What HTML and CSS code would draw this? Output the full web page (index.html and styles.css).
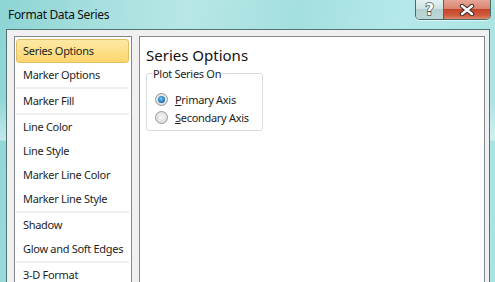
FILE: index.html
```html
<!DOCTYPE html>
<html>
<head>
<meta charset="utf-8">
<link rel="stylesheet" href="styles.css">
</head>
<body>
<div class="window">
  <div class="titlebar">
    <span class="title">Format Data Series</span>
    <div class="caption-buttons">
      <div class="cbtn help"><span class="help-glyph">?</span></div>
      <div class="cbtn close">
        <svg width="16" height="12" viewBox="0 0 16 12">
          <path d="M3 2 L13 10 M13 2 L3 10" stroke="#3a2a28" stroke-width="4.4" stroke-linecap="round"/>
          <path d="M3 2 L13 10 M13 2 L3 10" stroke="#ffffff" stroke-width="2.4" stroke-linecap="round"/>
        </svg>
      </div>
    </div>
  </div>
  <div class="client">
    <ul class="nav">
      <li class="item selected">Series Options</li>
      <li class="item">Marker Options</li>
      <li class="sep"></li>
      <li class="item">Marker Fill</li>
      <li class="sep"></li>
      <li class="item">Line Color</li>
      <li class="item">Line Style</li>
      <li class="item">Marker Line Color</li>
      <li class="item">Marker Line Style</li>
      <li class="sep"></li>
      <li class="item">Shadow</li>
      <li class="item">Glow and Soft Edges</li>
      <li class="sep"></li>
      <li class="item">3-D Format</li>
    </ul>
    <div class="panel">
      <h1 class="heading">Series Options</h1>
      <fieldset class="group">
        <legend class="group-title">Plot Series On</legend>
        <label class="radio-row"><span class="radio checked"></span><span class="radio-label"><u>P</u>rimary Axis</span></label>
        <label class="radio-row"><span class="radio"></span><span class="radio-label"><u>S</u>econdary Axis</span></label>
      </fieldset>
    </div>
  </div>
</div>
</body>
</html>
```

FILE: styles.css
```css
html, body {
  margin: 0;
  padding: 0;
}
body {
  width: 495px;
  height: 282px;
  overflow: hidden;
  font-family: "Segoe UI", "Noto Sans", sans-serif;
  font-size: 11px;
  letter-spacing: -0.3px;
  color: #1e1e1e;
}
.window {
  width: 495px;
  height: 282px;
  display: flex;
  flex-direction: column;
  background:
    linear-gradient(to bottom, rgba(255,255,255,0) 0px, rgba(255,255,255,0) 100px, rgba(255,255,255,0.45) 140px, rgba(255,255,255,0) 141px),
    linear-gradient(100deg, #8dd4d4 0%, #a8e0df 20%, #b7e7e6 35%, #a4dfdf 55%, #b5e9e9 75%, #a8e2e2 100%);
}
.titlebar {
  height: 29px;
  flex: none;
  display: flex;
  align-items: flex-start;
}
.title {
  margin: 7px 0 0 8px;
  line-height: 16px;
  font-size: 12px;
  letter-spacing: -0.35px;
  color: #111;
}
.caption-buttons {
  margin-left: auto;
  margin-right: 4px;
  display: flex;
  height: 19px;
  border: 1px solid #4b6a6a;
  border-top: none;
  border-radius: 0 0 5px 5px;
  overflow: hidden;
  box-shadow: 0 1px 0 rgba(255,255,255,0.6);
}
.cbtn {
  display: flex;
  align-items: center;
  justify-content: center;
}
.help {
  width: 27px;
  background: linear-gradient(to bottom, #e3f1f1 0%, #cfe2e2 45%, #b3cfcf 50%, #bcd8d8 100%);
  border-right: 1px solid #4b6a6a;
}
.help-glyph {
  font-family: "DejaVu Sans", sans-serif;
  font-weight: bold;
  font-size: 15px;
  line-height: 15px;
  letter-spacing: 0;
  color: #fff;
  -webkit-text-stroke: 1.4px #4a5656;
  paint-order: stroke fill;
  margin-top: 1px;
}
.close {
  width: 46px;
  background: linear-gradient(to bottom, #e8a595 0%, #d98670 45%, #c5452c 50%, #cf5a3c 80%, #de8a6a 100%);
}
.client {
  flex: 1;
  display: flex;
  gap: 7px;
  margin: 0 5px 0 6px;
  padding: 6px 4px 0 7px;
  background: #f0f0f0;
  border: 1px solid #4f7474;
  border-bottom: none;
  min-height: 0;
}
.nav {
  width: 118px;
  box-sizing: border-box;
  flex: none;
  margin: 0;
  padding: 2px 2px 0 1px;
  list-style: none;
  background: #fff;
  border: 1px solid #828790;
  border-bottom: none;
  overflow: hidden;
}
.item {
  height: 24px;
  box-sizing: border-box;
  border: 1px solid transparent;
  border-radius: 3px;
  padding-left: 6px;
  line-height: 21px;
  white-space: nowrap;
  color: #1e1e1e;
}
.item.selected {
  border-color: #e2bd66;
  background: linear-gradient(to bottom, #fde8a3 0%, #fde08a 50%, #fcd56d 100%);
}
.sep {
  height: 2px;
  background: #eef0f4;
}
.panel {
  flex: 1;
  background: #fff;
  border: 1px solid #828790;
  border-bottom: none;
  padding-left: 6px;
}
.heading {
  margin: 8px 0 0 0;
  font-weight: normal;
  font-size: 15px;
  line-height: 20px;
  letter-spacing: 0;
  color: #111;
}
.group {
  margin: 1px 0 0 0;
  width: 117px;
  box-sizing: border-box;
  padding: 9px 0 4px 0;
  border: 1px solid #d5dde3;
  border-radius: 3px;
}
.group-title {
  margin-left: 5px;
  padding: 0 1px;
  line-height: 15px;
}
.radio-row {
  display: flex;
  align-items: center;
  height: 18px;
  padding-left: 8px;
  gap: 7px;
}
.radio {
  width: 13px;
  height: 13px;
  box-sizing: border-box;
  border-radius: 50%;
  border: 1px solid #979797;
  background: radial-gradient(circle at 50% 45%, #f4f4f4 0%, #e4e4e4 55%, #d2d2d2 100%);
  position: relative;
  flex: none;
}
.radio.checked::after {
  content: "";
  position: absolute;
  left: 2px;
  top: 2px;
  width: 7px;
  height: 7px;
  border-radius: 50%;
  background: radial-gradient(circle at 45% 40%, #8fd0f5 0%, #2a8ad0 45%, #0f4f8a 100%);
}
.radio-label u {
  text-decoration: underline;
  text-underline-offset: 1px;
}
```
